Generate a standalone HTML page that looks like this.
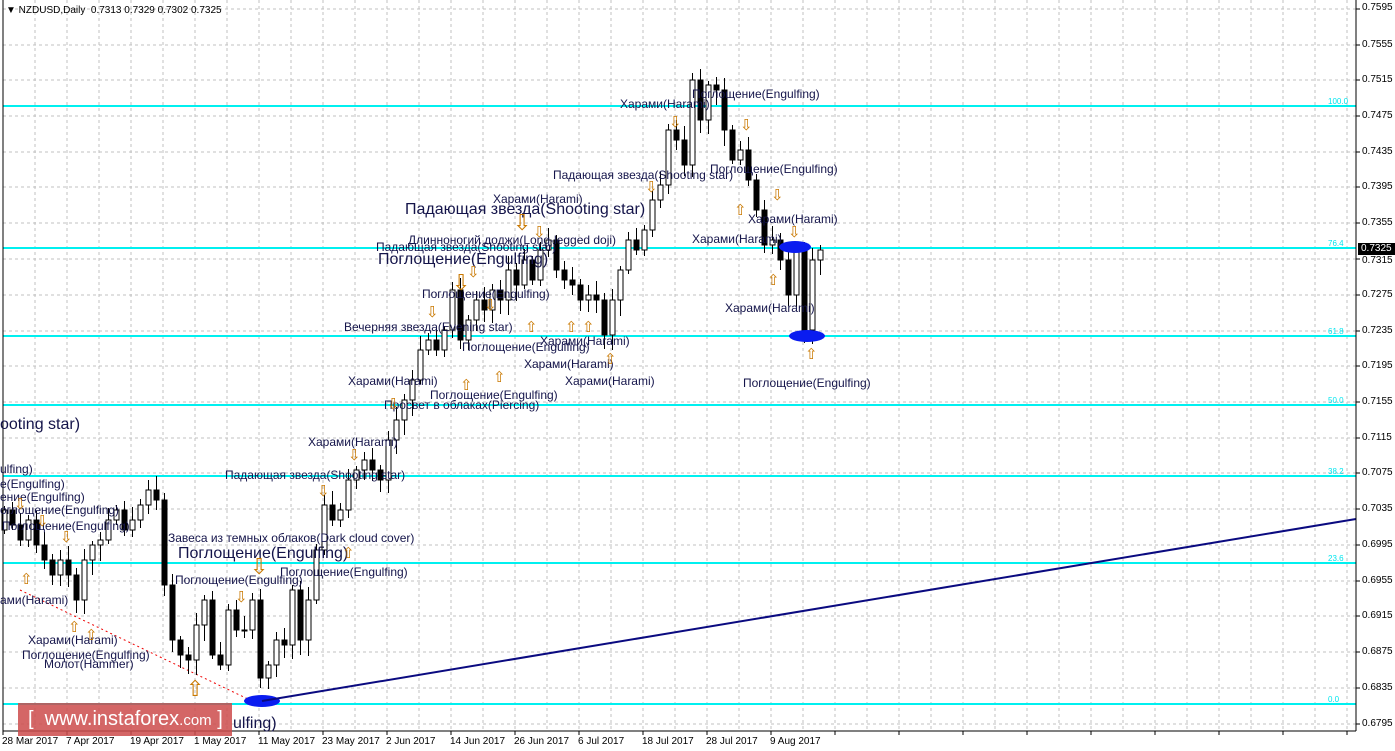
<!DOCTYPE html>
<html><head><meta charset="utf-8"><style>
html,body{margin:0;padding:0;background:#fff;}
#c{position:relative;width:1395px;height:751px;overflow:hidden;font-family:"Liberation Sans","DejaVu Sans",sans-serif;}
.t{position:absolute;font-size:12px;color:#14144a;white-space:nowrap;line-height:14px;}
.b{font-size:16px;line-height:18px;}
.a{position:absolute;font-size:15px;color:#c97800;line-height:15px;font-family:"DejaVu Sans",sans-serif;}
.ax{position:absolute;left:1362px;font-size:10px;color:#000;line-height:10px;}
.d{position:absolute;top:736px;font-size:10px;color:#000;white-space:nowrap;}
.f{position:absolute;left:1328px;font-size:8px;color:#00e5ee;}
</style></head><body><div id="c">
<svg id="s" width="1395" height="751" style="position:absolute;left:0;top:0">
<g id="grid" stroke="#c0c0c0" stroke-dasharray="3,3" stroke-width="1"></g>
<g stroke="#00f0f0" stroke-width="2">
<line x1="3" y1="106" x2="1356" y2="106"/><line x1="3" y1="248" x2="1356" y2="248"/>
<line x1="3" y1="336" x2="1356" y2="336"/><line x1="3" y1="405" x2="1356" y2="405"/>
<line x1="3" y1="476" x2="1356" y2="476"/><line x1="3" y1="563" x2="1356" y2="563"/>
<line x1="3" y1="704" x2="1356" y2="704"/></g>
<line x1="20" y1="590" x2="250" y2="700" stroke="#e00" stroke-dasharray="2,3"/>
<g id="cd"></g>
<ellipse cx="262" cy="701" rx="18" ry="6" fill="#0a1cf0"/>
<ellipse cx="795" cy="247" rx="16" ry="6" fill="#0a1cf0"/>
<ellipse cx="807" cy="336" rx="18" ry="6" fill="#0a1cf0"/>
<line x1="262" y1="701" x2="1356" y2="519" stroke="#0a0a80" stroke-width="2"/>
<line x1="3" y1="0" x2="3" y2="731" stroke="#000"/>
<line x1="1356" y1="0" x2="1356" y2="731" stroke="#000"/>
<line x1="3" y1="731" x2="1356" y2="731" stroke="#000"/>
<g id="tk" stroke="#000"></g>
</svg>
<div class="t" style="left:6px;top:4px;font-size:10px;color:#000">&#9660; NZDUSD,Daily&nbsp; 0.7313 0.7329 0.7302 0.7325</div>

<div class="t" style="left:692px;top:87px">Поглощение(Engulfing)</div>
<div class="t" style="left:620px;top:97px">Харами(Harami)</div>
<div class="t" style="left:710px;top:162px">Поглощение(Engulfing)</div>
<div class="t" style="left:553px;top:168px">Падающая звезда(Shooting star)</div>
<div class="t" style="left:493px;top:192px">Харами(Harami)</div>
<div class="t b" style="left:405px;top:201px">Падающая звезда(Shooting star)</div>
<div class="t" style="left:748px;top:212px">Харами(Harami)</div>
<div class="t" style="left:408px;top:233px">Длинноногий доджи(Long-legged doji)</div>
<div class="t" style="left:692px;top:232px">Харами(Harami)</div>
<div class="t" style="left:376px;top:240px">Падающая звезда(Shooting star)</div>
<div class="t b" style="left:378px;top:251px">Поглощение(Engulfing)</div>
<div class="t" style="left:422px;top:287px">Поглощение(Engulfing)</div>
<div class="t" style="left:725px;top:301px">Харами(Harami)</div>
<div class="t" style="left:344px;top:320px">Вечерняя звезда(Evening star)</div>
<div class="t" style="left:540px;top:334px">Харами(Harami)</div>
<div class="t" style="left:462px;top:340px">Поглощение(Engulfing)</div>
<div class="t" style="left:524px;top:357px">Харами(Harami)</div>
<div class="t" style="left:348px;top:374px">Харами(Harami)</div>
<div class="t" style="left:565px;top:374px">Харами(Harami)</div>
<div class="t" style="left:743px;top:376px">Поглощение(Engulfing)</div>
<div class="t" style="left:430px;top:388px">Поглощение(Engulfing)</div>
<div class="t" style="left:384px;top:398px">Просвет в облаках(Piercing)</div>
<div class="t b" style="left:0px;top:416px">ooting star)</div>
<div class="t" style="left:308px;top:435px">Харами(Harami)</div>
<div class="t" style="left:0px;top:462px">ulfing)</div>
<div class="t" style="left:225px;top:468px">Падающая звезда(Shooting star)</div>
<div class="t" style="left:0px;top:477px">e(Engulfing)</div>
<div class="t" style="left:0px;top:490px">ение(Engulfing)</div>
<div class="t" style="left:0px;top:503px">оглощение(Engulfing)</div>
<div class="t" style="left:2px;top:519px">Поглощение(Engulfing)</div>
<div class="t" style="left:168px;top:531px">Завеса из темных облаков(Dark cloud cover)</div>
<div class="t b" style="left:178px;top:545px">Поглощение(Engulfing)</div>
<div class="t" style="left:280px;top:565px">Поглощение(Engulfing)</div>
<div class="t" style="left:175px;top:573px">Поглощение(Engulfing)</div>
<div class="t" style="left:0px;top:593px">ами(Harami)</div>
<div class="t" style="left:28px;top:633px">Харами(Harami)</div>
<div class="t" style="left:22px;top:648px">Поглощение(Engulfing)</div>
<div class="t" style="left:44px;top:657px">Молот(Hammer)</div>
<div class="t b" style="left:233px;top:715px">ulfing)</div>

<div class="a" style="left:669px;top:115px">⇩</div>
<div class="a" style="left:740px;top:118px">⇩</div>
<div class="a" style="left:645px;top:180px">⇩</div>
<div class="a" style="left:771px;top:188px">⇩</div>
<div class="a" style="left:734px;top:203px">⇧</div>
<div class="a" style="left:513px;top:216px;font-size:22px">⇩</div>
<div class="a" style="left:533px;top:225px">⇩</div>
<div class="a" style="left:788px;top:225px">⇩</div>
<div class="a" style="left:767px;top:273px">⇧</div>
<div class="a" style="left:467px;top:265px">⇩</div>
<div class="a" style="left:452px;top:276px;font-size:22px">⇩</div>
<div class="a" style="left:484px;top:298px">⇩</div>
<div class="a" style="left:426px;top:305px">⇩</div>
<div class="a" style="left:525px;top:320px">⇧</div>
<div class="a" style="left:565px;top:320px">⇧</div>
<div class="a" style="left:582px;top:320px">⇧</div>
<div class="a" style="left:604px;top:352px">⇧</div>
<div class="a" style="left:805px;top:347px">⇧</div>
<div class="a" style="left:460px;top:378px">⇧</div>
<div class="a" style="left:493px;top:370px">⇧</div>
<div class="a" style="left:387px;top:397px">⇩</div>
<div class="a" style="left:348px;top:448px">⇩</div>
<div class="a" style="left:317px;top:484px">⇩</div>
<div class="a" style="left:342px;top:546px">⇧</div>
<div class="a" style="left:14px;top:497px">⇩</div>
<div class="a" style="left:36px;top:514px">⇩</div>
<div class="a" style="left:60px;top:530px">⇩</div>
<div class="a" style="left:20px;top:572px">⇧</div>
<div class="a" style="left:235px;top:590px">⇩</div>
<div class="a" style="left:68px;top:620px">⇧</div>
<div class="a" style="left:85px;top:628px">⇧</div>
<div class="a" style="left:250px;top:560px;font-size:22px">⇩</div>
<div class="a" style="left:186px;top:682px;font-size:22px">⇧</div>

<div class="f" style="top:97px">100.0</div><div class="f" style="top:239px">76.4</div>
<div class="f" style="top:327px">61.8</div><div class="f" style="top:396px">50.0</div>
<div class="f" style="top:467px">38.2</div><div class="f" style="top:554px">23.6</div>
<div class="f" style="top:695px">0.0</div>

<div class="ax" style="top:3px">0.7595</div><div class="ax" style="top:40px">0.7555</div>
<div class="ax" style="top:75px">0.7515</div><div class="ax" style="top:111px">0.7475</div>
<div class="ax" style="top:147px">0.7435</div><div class="ax" style="top:182px">0.7395</div>
<div class="ax" style="top:218px">0.7355</div><div class="ax" style="top:256px">0.7315</div>
<div class="ax" style="top:290px">0.7275</div><div class="ax" style="top:326px">0.7235</div>
<div class="ax" style="top:361px">0.7195</div><div class="ax" style="top:397px">0.7155</div>
<div class="ax" style="top:433px">0.7115</div><div class="ax" style="top:468px">0.7075</div>
<div class="ax" style="top:504px">0.7035</div><div class="ax" style="top:540px">0.6995</div>
<div class="ax" style="top:576px">0.6955</div><div class="ax" style="top:611px">0.6915</div>
<div class="ax" style="top:647px">0.6875</div><div class="ax" style="top:683px">0.6835</div>
<div class="ax" style="top:719px">0.6795</div>
<div class="ax" style="top:243px;left:1358px;background:#000;color:#fff;padding:1px 3px">0.7325</div>

<div class="d" style="left:2px">28 Mar 2017</div><div class="d" style="left:66px">7 Apr 2017</div>
<div class="d" style="left:130px">19 Apr 2017</div><div class="d" style="left:194px">1 May 2017</div>
<div class="d" style="left:258px">11 May 2017</div><div class="d" style="left:322px">23 May 2017</div>
<div class="d" style="left:386px">2 Jun 2017</div><div class="d" style="left:450px">14 Jun 2017</div>
<div class="d" style="left:514px">26 Jun 2017</div><div class="d" style="left:578px">6 Jul 2017</div>
<div class="d" style="left:642px">18 Jul 2017</div><div class="d" style="left:706px">28 Jul 2017</div>
<div class="d" style="left:770px">9 Aug 2017</div>

<div style="position:absolute;left:18px;top:703px;width:214px;height:33px;background:rgba(205,75,75,0.85);color:#fff;font-size:20px;line-height:33px;white-space:nowrap;padding-left:10px;box-sizing:border-box">[&nbsp; www.instaforex<span style="font-size:15px">.com</span> ]</div>
</div>
<script>
(function(){
var ns="http://www.w3.org/2000/svg";
function el(p,n,a){var e=document.createElementNS(ns,n);for(var k in a)e.setAttribute(k,a[k]);p.appendChild(e);return e;}
var g=document.getElementById('grid');
for(var x=35;x<1356;x+=32)el(g,'line',{x1:x,y1:0,x2:x,y2:731});
var ys=[9,45,80,116,152,187,223,259,295,331,366,402,438,473,509,545,581,616,652,688,724];
ys.forEach(function(y){el(g,'line',{x1:3,y1:y,x2:1356,y2:y});});
var tk=document.getElementById('tk');
ys.forEach(function(y){el(tk,'line',{x1:1356,y1:y,x2:1360,y2:y});});
for(var x=3;x<1356;x+=64)el(tk,'line',{x1:x,y1:731,x2:x,y2:735});
var c=[510,525,540,520,545,560,575,560,575,600,560,545,540,520,510,530,520,505,490,500,585,640,655,660,625,600,655,665,610,630,630,600,678,665,640,645,590,640,600,550,505,520,510,480,470,460,470,480,440,420,400,380,350,340,350,330,290,340,320,300,310,290,300,270,285,260,280,250,240,270,280,285,300,295,300,335,300,270,240,250,230,200,185,130,140,165,80,120,85,90,130,160,150,180,210,245,240,260,295,250,330,260,250];
var cd=document.getElementById('cd');var o=530;
for(var i=0;i<c.length;i++){var x=4+i*8,cl=c[i];var tp=Math.min(o,cl),bt=Math.max(o,cl);
var r1=4+((i*37)%11),r2=4+((i*53)%13);
el(cd,'line',{x1:x+0.5,y1:tp-r1,x2:x+0.5,y2:bt+r2,stroke:'#000'});
var h=Math.max(bt-tp,1);
el(cd,'rect',{x:x-2,y:tp,width:5,height:h,fill:cl<o?'#fff':'#000',stroke:'#000','stroke-width':1});
o=cl;}
})();
</script>
</body></html>
